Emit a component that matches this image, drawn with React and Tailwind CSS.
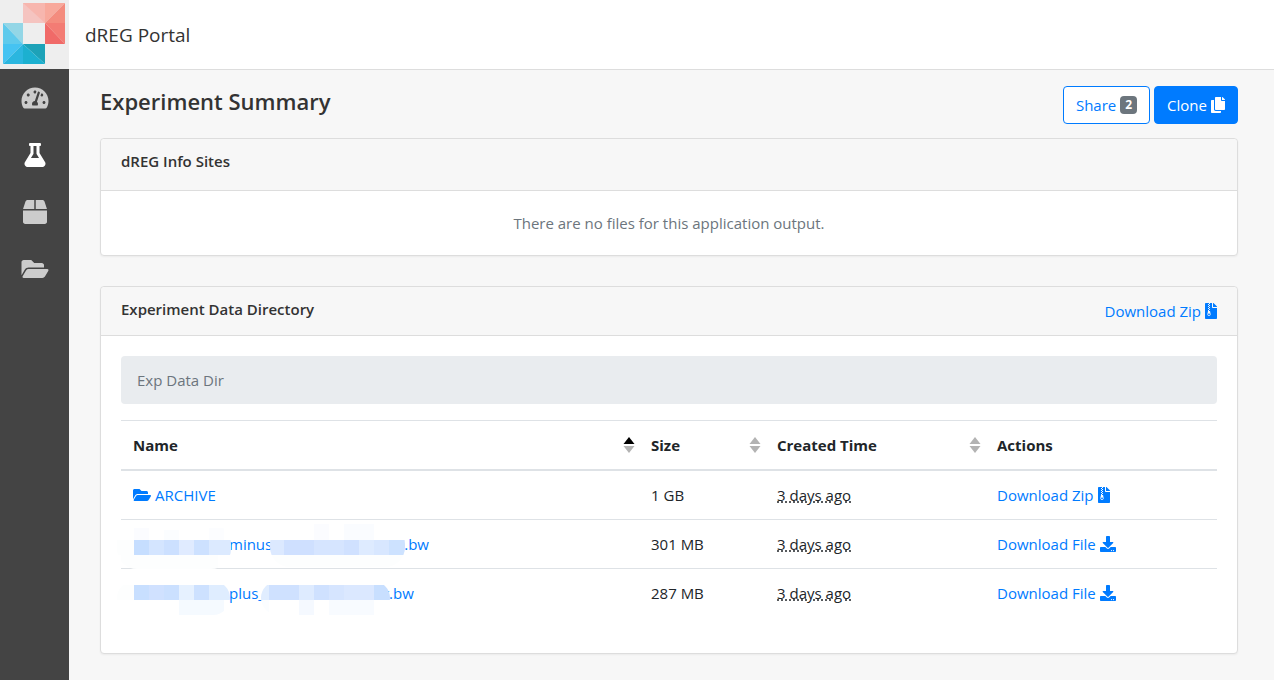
import { FaBox, FaCopy, FaDownload, FaFileArchive, FaFlask, FaFolderOpen, FaTachometerAlt } from 'react-icons/fa'

const NAV = [
  { label: 'Dashboard',   icon: FaTachometerAlt },
  { label: 'Experiments', icon: FaFlask, active: true },
  { label: 'Projects',    icon: FaBox },
  { label: 'Storage',     icon: FaFolderOpen },
]

// Masked parts of the file names. Blocks are [x, y, width, height, colour],
// stroke is the rounded outline that cuts them off.
const MASKS = {
  minusStart: {
    width: 96,
    stroke: { x: -16, y: -8, width: 114, height: 45, rx: 20 },
    blocks: [
      [1, -4, 15, 12, '#fbfcff'], [31, -2, 15, 10, '#fbfdff'], [76, -4, 15, 12, '#fcfdff'],
      [-16, 8, 17, 15, '#fdfefe'], [-12, 23, 97, 14, '#fdfefe'],
      [1, 8, 15, 15, '#c6deff'], [16, 8, 15, 15, '#d4e5ff'], [31, 8, 15, 15, '#cce0ff'],
      [46, 8, 15, 15, '#e0ebff'], [61, 8, 15, 15, '#cde1ff'], [76, 8, 22, 15, '#dceaff'],
    ],
  },
  minusEnd: {
    width: 132,
    stroke: { x: -2, y: -8, width: 135, height: 43, rx: 20 },
    blocks: [
      [42, -8, 15, 16, '#fbfcff'], [72, -8, 30, 16, '#fafcff'], [-2, 23, 135, 12, '#fdfefe'],
      [-2, 8, 14, 15, '#dce9ff'], [12, 8, 30, 15, '#cfe0ff'], [42, 8, 30, 15, '#d6e5ff'],
      [72, 8, 15, 15, '#d0e1ff'], [87, 8, 15, 15, '#deebff'], [102, 8, 15, 15, '#d8e7ff'],
      [117, 8, 16, 15, '#cde2ff'],
    ],
  },
  plusStart: {
    width: 96,
    stroke: { x: -16, y: 0, width: 113, height: 34, rx: 17 },
    blocks: [
      [46, 19, 45, 15, '#f5faff'], [-16, 4, 17, 15, '#fdfefe'],
      [1, 4, 15, 15, '#c8dfff'], [16, 4, 15, 15, '#d0e1ff'], [31, 4, 15, 15, '#cbe0ff'],
      [46, 4, 15, 15, '#e6f1ff'], [61, 4, 15, 15, '#cde1ff'], [76, 4, 21, 15, '#dfedff'],
    ],
  },
  plusEnd: {
    width: 118,
    stroke: { x: -4, y: 0, width: 129, height: 34, rx: 17 },
    blocks: [
      [34, 19, 15, 15, '#f5f9ff'], [64, 19, 45, 15, '#f8fbff'], [-4, 19, 8, 15, '#fbfdff'],
      [-4, 4, 8, 15, '#e0edff'], [4, 4, 30, 15, '#cfe1ff'], [34, 4, 15, 15, '#deebff'],
      [49, 4, 15, 15, '#cfe1ff'], [64, 4, 15, 15, '#d6e5ff'], [79, 4, 30, 15, '#dbe8ff'],
      [109, 4, 16, 15, '#c8dfff'],
    ],
  },
}

const FILES = [
  { id: 'archive', name: 'ARCHIVE', size: '1 GB', created: '3 days ago', folder: true },
  { id: 'minus', parts: ['minusStart', 'minus', 'minusEnd', '.bw'], size: '301 MB', created: '3 days ago' },
  { id: 'plus', parts: ['plusStart', 'plus_', 'plusEnd', 'r.bw'], size: '287 MB', created: '3 days ago' },
]

function Logo() {
  return (
    <svg viewBox="0 0 69 69" className="block w-full h-auto bg-[#eeeeee]" aria-hidden="true">
      <path fill="#f7b6ae" d="M23 3h22v20H23z" />
      <path fill="#f5c4c0" d="M23 3l22 20H23z" />
      <path fill="#f8a99c" d="M45 3h20L45 23z" />
      <path fill="#f48c7e" d="M65 3v20H45z" />
      <path fill="#f37c74" d="M45 23h20v21z" />
      <path fill="#f06a68" d="M45 23v21h20z" />
      <path fill="#93d6e6" d="M3 23h20v21z" />
      <path fill="#5fcaec" d="M3 23v21h20z" />
      <path fill="#45c3f2" d="M3 44h20L3 64z" />
      <path fill="#2bb6df" d="M23 44v20H3z" />
      <path fill="#1da2b8" d="M23 44h22v20z" />
      <path fill="#1cb0d0" d="M23 44v20h22z" />
    </svg>
  )
}

function Mask({ name }) {
  const { width, stroke, blocks } = MASKS[name]
  return (
    <svg width={width} height="24" viewBox={`0 0 ${width} 24`} className="relative shrink-0 overflow-visible" aria-hidden="true">
      <clipPath id={name}><rect {...stroke} /></clipPath>
      <g clipPath={`url(#${name})`} shapeRendering="crispEdges">
        {blocks.map(([x, y, w, h, fill]) => <rect key={`${x},${y}`} x={x} y={y} width={w} height={h} fill={fill} />)}
      </g>
    </svg>
  )
}

function SortArrows({ asc }) {
  return (
    <svg width="12" height="16" viewBox="0 0 12 16" className="shrink-0" aria-hidden="true">
      <path fill={asc ? '#000000' : '#b3b3b3'} d="M6 0l5.500 7H.5z" />
      <path fill="#b3b3b3" d="M6 16L.5 9h11z" />
    </svg>
  )
}

function SortHeader({ label, asc, className }) {
  return (
    <th scope="col" aria-sort={asc ? 'ascending' : 'none'} className={`p-0 ${className}`}>
      <button className="flex w-full items-center justify-between py-3 pl-3 pr-1 font-bold">
        {label}
        <SortArrows asc={asc} />
      </button>
    </th>
  )
}

function DownloadLink({ zip }) {
  const Icon = zip ? FaFileArchive : FaDownload
  return (
    <a href="#download" className="flex w-fit items-center gap-1 text-[#007bff] hover:underline">
      {zip ? 'Download Zip' : 'Download File'}
      <Icon size={16} className={zip ? 'w-3' : 'w-4'} />
    </a>
  )
}

function FileName({ file }) {
  if (file.folder) {
    return (
      <a href="#archive" className="flex w-fit items-center gap-1 text-[#007bff] hover:underline">
        <FaFolderOpen className="w-[18px] h-4" />
        {file.name}
      </a>
    )
  }
  return (
    <a href={`#${file.id}`} className="flex w-fit items-center text-[#007bff] hover:underline">
      {file.parts.map(p => MASKS[p] ? <Mask key={p} name={p} /> : <span key={p}>{p}</span>)}
    </a>
  )
}

export default function App() {
  return (
    <div className="flex min-h-screen bg-[#f7f7f7] font-['Open_Sans',sans-serif] text-[15px] leading-6 text-[#212529]">
      <aside className="w-[69px] shrink-0 bg-[#444444]">
        <a href="#home" aria-label="dREG Portal home"><Logo /></a>
        <nav className="flex flex-col">
          {NAV.map(({ label, icon: Icon, active }) => (
            <a key={label} href={`#${label.toLowerCase()}`} aria-label={label}
              className={`flex h-[57px] items-center justify-center ${active ? 'text-white' : 'text-[#cccccc]'}`}>
              <Icon className="w-7 h-6" />
            </a>
          ))}
        </nav>
      </aside>

      <div className="flex-1 min-w-0">
        <header className="flex h-[70px] items-center border-b border-[#dddddd] bg-white px-4">
          <span className="text-[19px] text-[#333333]">dREG Portal</span>
        </header>

        <main className="pt-4 pb-6 pl-[31px] pr-9">
          <div className="mb-[14px] flex items-start justify-between">
            <h1 className="text-[22px] font-semibold leading-[30px] text-[#333333]">Experiment Summary</h1>
            <div className="flex gap-1">
              <button className="flex h-[38px] items-center gap-1 rounded border border-[#007bff] bg-white px-3 text-[#007bff]">
                Share
                <span className="rounded bg-[#6c757d] px-[5px] text-xs font-bold leading-[18px] text-white">2</span>
              </button>
              <button className="flex h-[38px] items-center gap-1 rounded border border-[#007bff] bg-[#007bff] px-3 text-white">
                Clone
                <FaCopy className="w-[14px] h-4" />
              </button>
            </div>
          </div>

          <section className="mb-[30px] rounded border border-[#dddddd] bg-white shadow-xs">
            <div className="rounded-t border-b border-[#dddddd] bg-[#f7f7f7] px-5 pt-[10px] pb-[17px]">
              <h2 className="text-[15px] font-semibold text-[#333333]">dREG Info Sites</h2>
            </div>
            <p className="p-5 text-center text-[#6c757d]">There are no files for this application output.</p>
          </section>

          <section className="rounded border border-[#dddddd] bg-white shadow-xs">
            <div className="flex min-h-[49px] items-end justify-between rounded-t border-b border-[#dddddd] bg-[#f7f7f7] px-5 pt-[10px] pb-3">
              <h2 className="self-start text-[15px] font-semibold text-[#333333]">Experiment Data Directory</h2>
              <DownloadLink zip />
            </div>
            <div className="px-5 pt-5 pb-9">
              <nav aria-label="Breadcrumb" className="mb-4 rounded bg-[#e9ecef] px-4 py-3 text-[#6c757d]">Exp Data Dir</nav>
              <table className="w-full table-fixed text-left">
                <thead>
                  <tr className="border-t border-b-2 border-t-[#dee2e6] border-b-[#dee2e6]">
                    <SortHeader label="Name" asc className="w-[518px]" />
                    <SortHeader label="Size" className="w-[126px]" />
                    <SortHeader label="Created Time" className="w-[220px]" />
                    <th scope="col" className="p-3 font-bold">Actions</th>
                  </tr>
                </thead>
                <tbody>
                  {FILES.map((f, i) => (
                    <tr key={f.id} className={i > 0 ? 'border-t border-[#dee2e6]' : ''}>
                      <td className="p-3"><FileName file={f} /></td>
                      <td className="p-3">{f.size}</td>
                      <td className="p-3">
                        <abbr title={f.created} className="underline decoration-dotted">{f.created}</abbr>
                      </td>
                      <td className="p-3"><DownloadLink zip={f.folder} /></td>
                    </tr>
                  ))}
                </tbody>
              </table>
            </div>
          </section>
        </main>
      </div>
    </div>
  )
}
